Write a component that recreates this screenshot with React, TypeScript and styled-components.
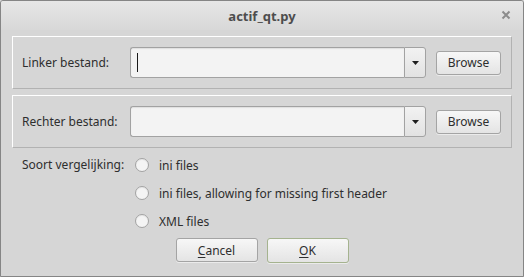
import React from 'react';
import styled, { createGlobalStyle } from 'styled-components';

const GlobalStyle = createGlobalStyle`
  html, body {
    margin: 0;
    padding: 0;
    background: #d6d6d6;
  }
  * {
    box-sizing: border-box;
  }
`;

const Window = styled.div`
  width: 524px;
  height: 277px;
  display: flex;
  flex-direction: column;
  background: #d6d6d6;
  border: 1px solid #858585;
  border-radius: 3px 3px 0 0;
  font-family: "Noto Sans", "Open Sans", sans-serif;
  font-size: 12px;
  color: #2e2e2e;
  overflow: hidden;
`;

const TitleBar = styled.div`
  height: 29px;
  flex: none;
  display: flex;
  align-items: center;
  justify-content: center;
  position: relative;
  background: linear-gradient(#e6e6e6, #d8d8d8);
  font-weight: bold;
  font-size: 13px;
  color: #4d4d4d;
`;

const CloseButton = styled.div`
  position: absolute;
  right: 12px;
  top: 9px;
  width: 10px;
  height: 10px;
  display: flex;
`;

const Body = styled.div`
  flex: 1;
  display: flex;
  flex-direction: column;
  padding: 6px 11px 0 11px;
`;

const GroupBox = styled.div`
  height: 53px;
  display: flex;
  align-items: center;
  padding: 0 10px 0 9px;
  border-top: 1px solid #ffffff;
  border-left: 1px solid #ffffff;
  border-right: 1px solid #b2b2b2;
  border-bottom: 1px solid #b2b2b2;
  & + & {
    margin-top: 6px;
  }
`;

const FieldLabel = styled.label`
  width: 108px;
  flex: none;
`;

const Combo = styled.div`
  display: flex;
  height: 31px;
  flex: 1;
`;

const ComboInput = styled.div`
  flex: 1;
  background: #f3f3f3;
  border: 1px solid #a2a2a2;
  border-right: none;
  border-radius: 3px 0 0 3px;
  box-shadow: inset 0 1px 1px rgba(0, 0, 0, 0.08);
  display: flex;
  align-items: center;
  padding-left: 6px;
`;

const Caret = styled.span`
  width: 1px;
  height: 19px;
  background: #1a1a1a;
`;

const ComboArrow = styled.div`
  width: 22px;
  flex: none;
  display: flex;
  align-items: center;
  justify-content: center;
  background: linear-gradient(#f2f2f2, #e2e2e2);
  border: 1px solid #a2a2a2;
  border-radius: 0 3px 3px 0;
`;

const Button = styled.button<{ $default?: boolean; $width: number }>`
  width: ${({ $width }) => $width}px;
  height: ${({ $default }) => ($default ? 25 : 24)}px;
  flex: none;
  font-family: inherit;
  font-size: 12px;
  color: #2e2e2e;
  padding: 0;
  background: linear-gradient(#f7f7f7, #e4e4e4);
  border: 1px solid ${({ $default }) => ($default ? '#a5b38f' : '#a4a4a4')};
  border-radius: 3px;
  box-shadow: 0 1px 0 rgba(255, 255, 255, 0.5);
`;

const BrowseButton = styled(Button)`
  margin-left: 10px;
`;

const ChoiceGrid = styled.div`
  display: grid;
  grid-template-columns: 113px auto;
  row-gap: 8px;
  padding: 7px 0 0 10px;
`;

const ChoiceLabel = styled.div`
  grid-row: 1;
  line-height: 20px;
`;

const RadioRow = styled.div`
  grid-column: 2;
  display: flex;
  align-items: center;
  height: 20px;
  gap: 10px;
`;

const Radio = styled.span`
  width: 14px;
  height: 14px;
  border-radius: 50%;
  background: #f4f4f4;
  border: 1px solid #a2a2a2;
  box-shadow: inset 0 1px 1px rgba(0, 0, 0, 0.06);
`;

const ButtonRow = styled.div`
  display: flex;
  justify-content: center;
  gap: 9px;
  margin-top: 7px;
`;

const Mnemonic = styled.span`
  text-decoration: underline;
  text-underline-offset: 2px;
`;

function DropArrow() {
  return (
    <svg width="7" height="4" viewBox="0 0 7 4">
      <path d="M0 0 H7 L3.5 4 Z" fill="#1e1e1e" />
    </svg>
  );
}

function FileRow({ label, focused }: { label: string; focused?: boolean }) {
  return (
    <GroupBox>
      <FieldLabel>{label}</FieldLabel>
      <Combo>
        <ComboInput>{focused && <Caret />}</ComboInput>
        <ComboArrow><DropArrow /></ComboArrow>
      </Combo>
      <BrowseButton $width={65}>Browse</BrowseButton>
    </GroupBox>
  );
}

const choices = ['ini files', 'ini files, allowing for missing first header', 'XML files'];

export default function App() {
  return (
    <>
      <GlobalStyle />
      <Window>
        <TitleBar>
          actif_qt.py
          <CloseButton>
            <svg width="10" height="10" viewBox="0 0 10 10">
              <path d="M1.5 1.5 L8.5 8.5 M8.5 1.5 L1.5 8.5" stroke="#8c8c8c" strokeWidth="2" />
            </svg>
          </CloseButton>
        </TitleBar>
        <Body>
          <FileRow label="Linker bestand:" focused />
          <FileRow label="Rechter bestand:" />
          <ChoiceGrid>
            <ChoiceLabel>Soort vergelijking:</ChoiceLabel>
            {choices.map((c) => (
              <RadioRow key={c}>
                <Radio />
                {c}
              </RadioRow>
            ))}
          </ChoiceGrid>
          <ButtonRow>
            <Button $width={82}><Mnemonic>C</Mnemonic>ancel</Button>
            <Button $width={82} $default><Mnemonic>O</Mnemonic>K</Button>
          </ButtonRow>
        </Body>
      </Window>
    </>
  );
}
